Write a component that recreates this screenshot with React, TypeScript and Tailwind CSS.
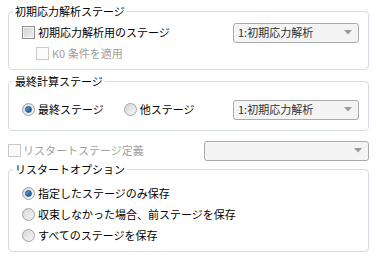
import React from "react";

function Checkbox({ disabled }: { disabled?: boolean }) {
  return (
    <span
      className={`inline-block w-[13px] h-[13px] shrink-0 border ${
        disabled
          ? "border-[#c9c9c9] bg-[#fbfbfb]"
          : "border-[#8e8f8f] bg-gradient-to-br from-[#cfcfcf] to-[#f2f2f2] shadow-[inset_0_0_0_1px_#f4f4f4]"
      }`}
    />
  );
}

function Radio({ checked }: { checked?: boolean }) {
  return (
    <span className="inline-flex items-center justify-center w-[13px] h-[13px] shrink-0 rounded-full border border-[#a3a3a3] bg-gradient-to-br from-[#d6d6d6] to-[#f7f7f7]">
      {checked && (
        <span className="w-[7px] h-[7px] rounded-full bg-gradient-to-br from-[#5fa3d8] to-[#0b4f8e] border border-[#1c5a94]" />
      )}
    </span>
  );
}

function Combo({ text, width }: { text?: string; width: string }) {
  return (
    <div
      className={`${width} h-[20px] flex items-center justify-between rounded-[3px] border border-[#a9abab] bg-[#f4f4f4] pl-[4px] pr-[6px]`}
    >
      <span className="text-[#303030]">{text}</span>
      <svg width="8" height="5" viewBox="0 0 8 5">
        <path d="M0 0H8L4 4.5Z" fill="#9a9a9a" />
      </svg>
    </div>
  );
}

function Group({
  title,
  children,
  className,
}: {
  title: string;
  children: React.ReactNode;
  className?: string;
}) {
  return (
    <fieldset
      className={`mx-[8px] rounded-[4px] border border-[#d4dbe3] ${className ?? ""}`}
    >
      <legend className="ml-[4px] px-[2px] leading-[14px]">{title}</legend>
      {children}
    </fieldset>
  );
}

export default function App() {
  return (
    <div
      className="w-[377px] h-[256px] bg-white text-[11px] text-black overflow-hidden pt-[4px]"
      style={{ fontFamily: '"Noto Sans CJK JP", "Noto Sans", sans-serif' }}
    >
      <Group title="初期応力解析ステージ" className="pb-[5px]">
        <div className="flex flex-col pt-[4px]">
          <div className="h-[21px] flex items-center pl-[13px] pr-[9px]">
            <Checkbox />
            <span className="ml-[3px]">初期応力解析用のステージ</span>
            <div className="ml-auto">
              <Combo text="1:初期応力解析" width="w-[126px]" />
            </div>
          </div>
          <div className="h-[21px] flex items-center pl-[27px]">
            <Checkbox disabled />
            <span className="ml-[3px] text-[#a0a0a0]">K0 条件を適用</span>
          </div>
        </div>
      </Group>

      <Group title="最終計算ステージ" className="mt-[4px] pb-[10px]">
        <div className="pt-[11px] h-[32px] flex items-center pl-[13px] pr-[9px]">
          <Radio checked />
          <span className="ml-[3px]">最終ステージ</span>
          <span className="ml-[20px] flex items-center">
            <Radio />
            <span className="ml-[3px]">他ステージ</span>
          </span>
          <div className="ml-auto">
            <Combo text="1:初期応力解析" width="w-[126px]" />
          </div>
        </div>
      </Group>

      <div className="mt-[9px] h-[21px] flex items-center pl-[8px] pr-[8px]">
        <Checkbox disabled />
        <span className="ml-[2px] text-[#a0a0a0]">リスタートステージ定義</span>
        <div className="ml-auto">
          <Combo width="w-[165px]" />
        </div>
      </div>

      <Group title="リスタートオプション" className="mt-[1px] pb-[5px]">
        <div className="flex flex-col pt-[7px] pl-[13px]">
          <div className="h-[21px] flex items-center">
            <Radio checked />
            <span className="ml-[3px]">指定したステージのみ保存</span>
          </div>
          <div className="h-[21px] flex items-center">
            <Radio />
            <span className="ml-[3px]">収束しなかった場合、前ステージを保存</span>
          </div>
          <div className="h-[21px] flex items-center">
            <Radio />
            <span className="ml-[3px]">すべてのステージを保存</span>
          </div>
        </div>
      </Group>
    </div>
  );
}
